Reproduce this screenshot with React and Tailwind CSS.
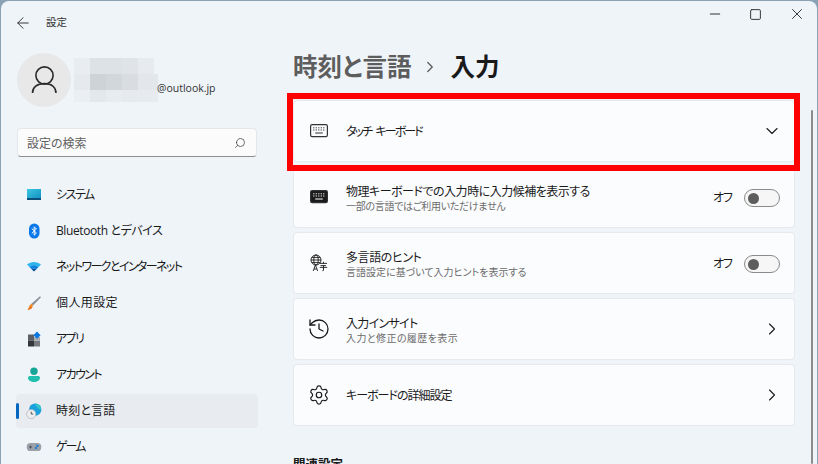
import { ArrowLeft, ChevronDown, ChevronRight, History, Minus, Search, Settings, Square, X } from 'lucide-react'

const SystemIcon = () => (
  <svg width="16" height="16" viewBox="0 0 16 16">
    <defs>
      <linearGradient id="sys" x1="0" y1="0" x2="1" y2="1">
        <stop offset="0" stopColor="#3cc6e0" />
        <stop offset="1" stopColor="#1492c4" />
      </linearGradient>
    </defs>
    <rect x="1" y="2" width="14" height="9" fill="url(#sys)" />
    <rect x="1" y="11" width="14" height="2" fill="#0b4f78" />
  </svg>
)

const BluetoothIcon = () => (
  <svg width="16" height="16" viewBox="0 0 16 16">
    <rect x="3" y="0.5" width="10.5" height="15" rx="5.2" fill="#0a78e8" />
    <path d="M5.8 5.6 10.4 10 8.2 12.2V3.8L10.4 6 5.8 10.4" fill="none" stroke="#fff" strokeWidth="1" />
  </svg>
)

const WifiIcon = () => (
  <svg width="16" height="16" viewBox="0 0 16 16">
    <path d="M1 5.6C5 2.2 11 2.2 15 5.6L12.6 8C9.8 5.8 6.2 5.8 3.4 8Z" fill="#2db6ee" />
    <path d="M3.4 8C6.2 5.8 9.8 5.8 12.6 8L10.4 10.2C8.9 9.2 7.1 9.2 5.6 10.2Z" fill="#0a84dc" />
    <path d="M5.6 10.2C7.1 9.2 8.9 9.2 10.4 10.2L8 12.6Z" fill="#0a4f94" />
  </svg>
)

const BrushIcon = () => (
  <svg width="16" height="16" viewBox="0 0 16 16">
    <path d="M14 1.2 15 2.2 7 10.4 5.4 8.8Z" fill="#8b8f94" />
    <path d="M5.4 8.8 7 10.4C6.6 13 4 15 1.4 14.8 3 13.4 2.6 10.4 5.4 8.8Z" fill="#f08a24" />
    <path d="M1.4 14.8C3 14.2 4 13.4 4.6 12.2L6 12.6C5 14 3.4 15 1.4 14.8Z" fill="#e8561a" />
  </svg>
)

const AppsIcon = () => (
  <svg width="16" height="16" viewBox="0 0 16 16">
    <rect x="2" y="3.5" width="6" height="6" fill="#5d6165" />
    <rect x="2" y="9.5" width="6" height="6" fill="#34373a" />
    <rect x="8" y="9.5" width="6" height="6" fill="#777b80" />
    <rect x="8" y="6" width="6" height="3.5" fill="#a9adb1" />
    <path d="M11 0.6 14.6 4.2 11 7.8 7.4 4.2Z" fill="#0a78e0" />
  </svg>
)

const AccountIcon = () => (
  <svg width="16" height="16" viewBox="0 0 16 16">
    <circle cx="8" cy="4.2" r="3.7" fill="#16a596" />
    <path d="M2 10.8C2 9.6 3 9 4 9H12C13 9 14 9.6 14 10.8 14 13.6 11 15 8 15S2 13.6 2 10.8Z" fill="#21bfae" />
  </svg>
)

const TimeIcon = () => (
  <svg width="16" height="16" viewBox="0 0 16 16">
    <circle cx="9.2" cy="6.6" r="6.2" fill="#1aa0dc" />
    <path d="M9.2 0.4A6.2 6.2 0 0 1 15.4 6.6C13 7 11.5 5 10.5 3.6 9.8 2.6 9.2 1.6 9.2 0.4Z" fill="#33c3c8" />
    <circle cx="5.2" cy="11" r="4.6" fill="#eceef0" stroke="#a4a8ac" strokeWidth="0.6" />
    <path d="M5.2 8.6V11H7.2" fill="none" stroke="#44484c" strokeWidth="0.9" />
  </svg>
)

const GameIcon = () => (
  <svg width="16" height="16" viewBox="0 0 16 16">
    <rect x="0.8" y="4" width="14.4" height="8" rx="3.6" fill="#9aa0a8" />
    <path d="M3 8H6M4.5 6.5V9.5" stroke="#4a4e54" strokeWidth="0.9" />
    <circle cx="11.4" cy="6.8" r="1.1" fill="#0a78e0" />
    <circle cx="10" cy="9" r="1.1" fill="#0a78e0" />
  </svg>
)

const UserIcon = () => (
  <svg width="30" height="30" viewBox="0 0 30 30" fill="none" stroke="#2b2b2b" strokeWidth="1.6">
    <circle cx="15.5" cy="10.5" r="8.6" />
    <path d="M3.5 28C3.5 22.5 8 18.6 15.5 18.6S27 22.5 27 28" />
  </svg>
)

const KeyboardIcon = ({ filled }) => (
  <svg width="18" height="18" viewBox="0 0 18 18" className="shrink-0">
    <rect
      x="0.6"
      y="2.6"
      width="16.8"
      height="12"
      rx="1.6"
      fill={filled ? '#1a1a1a' : 'none'}
      stroke="#333"
      strokeWidth="1.2"
    />
    <path
      d="M3.2 5.8H4.4M5.7 5.8H6.9M8.2 5.8H9.4M10.7 5.8H11.9M13.2 5.8H14.4M3.2 8H4.4M5.7 8H6.9M8.2 8H9.4M10.7 8H11.9M13.2 8H14.4M5.2 11H12.8"
      stroke={filled ? '#fff' : '#333'}
      strokeWidth="1"
    />
  </svg>
)

const LanguageIcon = () => (
  <svg width="18" height="18" viewBox="0 0 18 18" fill="none" stroke="#1a1a1a" strokeWidth="0.9" className="shrink-0">
    <circle cx="6" cy="6" r="5" />
    <ellipse cx="6" cy="6" rx="2.2" ry="5" />
    <path d="M1 6H11M1.8 3.4H10.2M1.8 8.6H10.2" />
    <path d="M3.2 17 5.4 11 7.6 17M4 15H6.8" />
    <path d="M10 9.4H17M13.5 7.8V9.4M10.5 11.6H16M13.5 11.6V16.4L12.4 16.8M9.8 13.4H17.2" />
  </svg>
)

const navItems = [
  { label: 'システム', icon: <SystemIcon />, fit: 'tracking-[-1.5px]' },
  { label: 'Bluetooth とデバイス', icon: <BluetoothIcon />, fit: 'tracking-[-0.4px]' },
  { label: 'ネットワークとインターネット', icon: <WifiIcon />, fit: 'tracking-[-1.6px]' },
  { label: '個人用設定', icon: <BrushIcon />, fit: 'tracking-[0.4px]' },
  { label: 'アプリ', icon: <AppsIcon />, fit: 'tracking-[-1.6px]' },
  { label: 'アカウント', icon: <AccountIcon />, fit: 'tracking-[-1.6px]' },
  { label: '時刻と言語', icon: <TimeIcon />, active: true, fit: 'tracking-[0.2px]' },
  { label: 'ゲーム', icon: <GameIcon />, fit: 'tracking-[-2px]' },
]

const mosaic = [
  ['bg-[#e9edf2]', 'bg-[#dde2e7]', 'bg-[#dde2e7]', 'bg-[#e0e4e9]', 'bg-[#e7ebf0]'],
  ['bg-[#e6eaef]', 'bg-[#ced3d8]', 'bg-[#d2d7dc]', 'bg-[#d9dde2]', 'bg-[#e3e7ec]'],
  ['bg-[#ebeff4]', 'bg-[#e4e8ed]', 'bg-[#e8ecf1]', 'bg-[#e6eaef]', 'bg-[#e7ebf0]'],
]

function Toggle() {
  return (
    <div className="flex items-center -mr-px mt-[2px]">
      <span className="text-xs text-[#1a1a1a] mr-3 tracking-[-1px]">オフ</span>
      <div className="w-[36px] h-[18px] rounded-full border border-[#8a8a8a] bg-[#f6f6f6] flex items-center pl-[3px]">
        <div className="w-[11px] h-[11px] rounded-full bg-[#5d5d5d]" />
      </div>
    </div>
  )
}

function Card({ icon, title, titleFit, sub, subFit, right }) {
  return (
    <div className="h-[62px] rounded-[4px] border border-[#e6e9ee] bg-[#fbfcfe] flex items-center pl-[16px] pr-[15px]">
      <div className="w-[18px] h-[18px] flex items-center justify-center shrink-0">{icon}</div>
      <div className={`ml-[18px] flex-1 min-w-0 ${sub ? 'pt-[2px]' : ''}`}>
        <div className={`text-xs leading-[15px] text-[#1a1a1a] ${titleFit}`}>{title}</div>
        {sub && <div className={`text-[10px] leading-[14px] text-[#6b6b6b] ${subFit}`}>{sub}</div>}
      </div>
      {right}
    </div>
  )
}

const rowChevron = <ChevronRight size={20} strokeWidth={1.3} className="shrink-0 -mr-[3px] text-[#1a1a1a]" />

export default function App() {
  return (
    <div className="relative h-[464px] w-[818px] overflow-hidden bg-[#8aa2b6] px-px pt-px font-['Open_Sans','Noto_Sans_CJK_JP',sans-serif] [font-feature-settings:'palt']">
      <div className="h-full rounded-t-lg bg-[#eff4f9] flex flex-col">
        <div className="h-[43px] shrink-0 flex items-center pl-[13px]">
          <ArrowLeft size={18} strokeWidth={1.3} className="text-[#333]" />
          <span className="ml-[14px] text-[10.5px] text-[#333]">設定</span>
          <div className="ml-auto self-start mt-[5px] flex items-center h-[16px] text-[#333]">
            <div className="w-[41px] flex justify-center"><Minus size={16} strokeWidth={1.6} /></div>
            <div className="w-[41px] flex justify-center"><Square size={13} strokeWidth={1.8} /></div>
            <div className="w-[41px] flex justify-center"><X size={18} strokeWidth={1.3} /></div>
          </div>
        </div>

        <div className="flex flex-1 min-h-0">
          <aside className="w-[273px] shrink-0 pl-[15px] pr-[16px]">
            <div className="mt-[9px] h-[54px] flex pl-px">
              <div className="w-[54px] h-[54px] rounded-full bg-[#e8e8e8] flex items-center justify-center">
                <UserIcon />
              </div>
              <div className="ml-[3px] mt-[5px] flex flex-col">
                {mosaic.map((row, i) => (
                  <div key={i} className={`flex ${i === 2 ? 'h-[12px]' : 'h-[16px]'}`}>
                    {row.map((c, j) => (
                      <div key={j} className={`${c} ${j === 4 && i > 0 ? 'w-[20px]' : 'w-[16px]'}`} />
                    ))}
                  </div>
                ))}
              </div>
              <span className="mt-[27px] -ml-px text-[10.5px] leading-[16px] text-[#333]">@outlook.jp</span>
            </div>

            <div className="mt-[21px] ml-px h-[29px] w-[240px] rounded-[4px] border border-[#e4e6e9] border-b-[#8f8f8f] bg-[#fbfbfc] flex items-center justify-between pl-[9px] pr-[10px]">
              <span className="text-xs text-[#5f5f5f] translate-y-px">設定の検索</span>
              <Search size={12} strokeWidth={1.4} className="text-[#333] -scale-x-100" />
            </div>

            <nav className="mt-[21px] flex flex-col gap-[2px]">
              {navItems.map((item) => (
                <div
                  key={item.label}
                  className={`relative h-[34px] rounded-[4px] flex items-center pl-[10px] ${item.active ? 'bg-[#e8ebf0]' : ''}`}
                >
                  {item.active && <div className="absolute left-0 top-[9px] h-[16px] w-[3px] rounded-full bg-[#0067c0]" />}
                  <div className="w-4 h-4 shrink-0">{item.icon}</div>
                  <span className={`ml-[14px] text-xs text-[#1a1a1a] ${item.fit}`}>{item.label}</span>
                </div>
              ))}
            </nav>
          </aside>

          <main className="flex-1 min-w-0 pl-[19px]">
            <div className="mt-[3px] h-[40px] flex items-center">
              <span className="text-[24.5px] font-semibold text-[#5d5d5d]">時刻と言語</span>
              <ChevronRight size={18} strokeWidth={1.7} className="ml-[10px] mr-[11px] text-[#5d5d5d]" />
              <span className="text-[24.5px] font-semibold text-[#1a1a1a]">入力</span>
            </div>

            <div className="mt-[13px] w-[502px] flex flex-col gap-[4px]">
              <Card
                icon={<KeyboardIcon />}
                title="タッチ キーボード"
                titleFit="tracking-[-1.9px] [word-spacing:3px]"
                right={<ChevronDown size={20} strokeWidth={1.3} className="shrink-0 -mr-[3px] text-[#1a1a1a]" />}
              />
              <Card
                icon={<KeyboardIcon filled />}
                title="物理キーボードでの入力時に入力候補を表示する"
                titleFit="tracking-[-0.5px]"
                sub="一部の言語ではご利用いただけません"
                subFit="tracking-[-0.3px]"
                right={<Toggle />}
              />
              <Card
                icon={<LanguageIcon />}
                title="多言語のヒント"
                titleFit="tracking-[-0.4px]"
                sub="言語設定に基づいて入力ヒントを表示する"
                right={<Toggle />}
              />
              <Card
                icon={<History size={24} strokeWidth={1.3} className="shrink-0 text-[#1a1a1a]" />}
                title="入力インサイト"
                titleFit="tracking-[-0.7px]"
                sub="入力と修正の履歴を表示"
                subFit="tracking-[0.4px]"
                right={rowChevron}
              />
              <Card
                icon={<Settings size={22} strokeWidth={1.3} className="shrink-0 text-[#1a1a1a]" />}
                title="キーボードの詳細設定"
                titleFit="tracking-[-1px]"
                right={rowChevron}
              />
            </div>

            <div className="mt-[30px] text-[12.5px] font-semibold text-[#1a1a1a]">関連設定</div>
          </main>
        </div>
      </div>

      {/* scrollbar and the red highlight sit on top of the page */}
      <div className="absolute left-[811px] top-[110px] bottom-0 w-[2px] rounded-full bg-[#8c8c8c]" />
      <div className="absolute left-[287px] top-[93px] h-[78px] w-[513px] border-[6px] border-[#ff0000]" />
    </div>
  )
}
